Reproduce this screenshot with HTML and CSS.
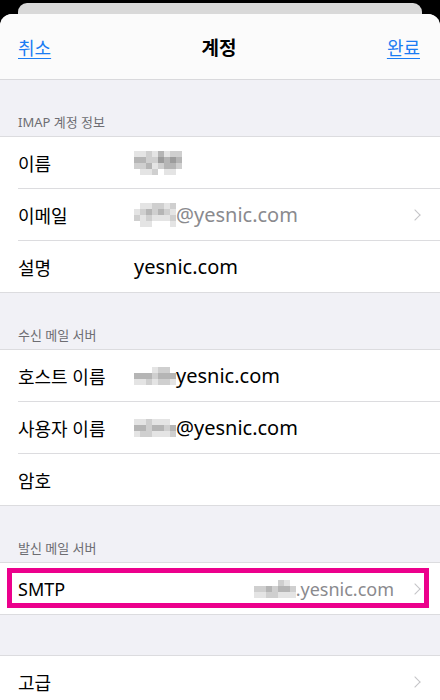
FILE: index.html
```html
<!DOCTYPE html>
<html lang="ko">
<head>
  <meta charset="UTF-8">
  <meta name="viewport" content="width=device-width, initial-scale=1.0">
  <title>계정</title>
  <link rel="stylesheet" href="styles.css">
</head>
<body>
  <div class="back-sheet"></div>
  <div class="sheet">
    <div class="navbar">
      <a class="nav-link" href="#">취소</a>
      <span class="nav-title">계정</span>
      <a class="nav-link" href="#">완료</a>
    </div>

    <div class="group-header">IMAP 계정 정보</div>
    <div class="group">
      <div class="row">
        <span class="label">이름</span>
        <span class="value"><span class="mosaic" data-pattern="11213122/33224343/22312332/01120110"></span></span>
      </div>
      <div class="row">
        <span class="label">이메일</span>
        <span class="value muted"><span class="mosaic" data-pattern="0112212/1232321/2121112/0110001"></span>@yesnic.com</span>
        <span class="chevron"></span>
      </div>
      <div class="row">
        <span class="label">설명</span>
        <span class="value">yesnic.com</span>
      </div>
    </div>

    <div class="group-header">수신 메일 서버</div>
    <div class="group">
      <div class="row">
        <span class="label">호스트 이름</span>
        <span class="value"><span class="mosaic" data-pattern="0001220/3332333/1121221"></span>yesnic.com</span>
      </div>
      <div class="row">
        <span class="label">사용자 이름</span>
        <span class="value"><span class="mosaic" data-pattern="1121110/3323323/1221112"></span>@yesnic.com</span>
      </div>
      <div class="row">
        <span class="label">암호</span>
      </div>
    </div>

    <div class="group-header">발신 메일 서버</div>
    <div class="group">
      <div class="row highlighted">
        <span class="label">SMTP</span>
        <span class="value muted end small"><span class="mosaic" data-pattern="0000210/2232332/1122111"></span>.yesnic.com</span>
        <span class="chevron"></span>
      </div>
    </div>

    <div class="spacer"></div>
    <div class="group">
      <div class="row">
        <span class="label">고급</span>
        <span class="value"></span>
        <span class="chevron"></span>
      </div>
    </div>
  </div>

  <script>
    // 모자이크 처리된 부분 그리기
    document.querySelectorAll(".mosaic").forEach(function (el) {
      const rows = el.dataset.pattern.split("/");
      el.style.gridTemplateColumns = "repeat(" + rows[0].length + ", 6px)";
      rows.forEach(function (row) {
        for (let i = 0; i < row.length; i++) {
          const cell = document.createElement("span");
          cell.className = "m" + row[i];
          el.appendChild(cell);
        }
      });
    });
  </script>
</body>
</html>
```

FILE: styles.css
```css
body {
  margin: 0;
  background-color: #000;
  font-family: "Noto Sans", "Noto Sans CJK KR", sans-serif;
  color: #000;
  overflow: hidden;
}
.back-sheet {
  height: 11px;
  margin: 3px 18px 0;
  background-color: #d9d9d9;
  border-radius: 9px 9px 0 0;
}
.sheet {
  background-color: #f1f1f6;
  border-radius: 12px 12px 0 0;
  overflow: hidden;
  height: 700px;
}
.navbar {
  height: 65px;
  display: flex;
  justify-content: space-between;
  align-items: center;
  padding: 0 20px 0 18px;
  background-color: #fbfbfb;
  border-bottom: 1px solid #d9d9dc;
}
.nav-link {
  color: #1b7cf3;
  font-size: 18px;
  text-decoration: underline;
  text-underline-offset: 3px;
}
.nav-title {
  font-size: 19px;
  font-weight: 600;
}
.group-header {
  height: 56px;
  box-sizing: border-box;
  padding: 0 18px 5px;
  display: flex;
  align-items: flex-end;
  font-size: 13px;
  color: #6d6d72;
  line-height: 18px;
}
.group {
  background-color: #fff;
  border-top: 1px solid #dcdcdf;
  border-bottom: 1px solid #dcdcdf;
}
.row {
  position: relative;
  height: 51px;
  display: flex;
  align-items: center;
  margin-left: 18px;
  padding-right: 21px;
  border-bottom: 1px solid #dcdcdf;
}
.row:last-child {
  border-bottom: none;
}
.label {
  width: 116px;
  flex-shrink: 0;
  font-size: 18px;
}
.value {
  flex: 1;
  display: flex;
  align-items: center;
  font-size: 20px;
}
.value.muted {
  color: #8a8a8e;
}
.value.small {
  font-size: 18px;
}
.value.end {
  justify-content: flex-end;
  padding-right: 17px;
}
.chevron {
  width: 7px;
  height: 7px;
  border-top: 1.5px solid #c4c4c7;
  border-right: 1.5px solid #c4c4c7;
  transform: rotate(45deg);
}
.spacer {
  height: 40px;
}
.highlighted::after {
  content: "";
  position: absolute;
  left: -11px;
  right: 11px;
  top: 5px;
  bottom: 6px;
  border: 5px solid #ec008c;
}
.mosaic {
  display: inline-grid;
  grid-auto-rows: 6px;
}
.m0 { background-color: transparent; }
.m1 { background-color: #e4e4e4; }
.m2 { background-color: #cfcfcf; }
.m3 { background-color: #b5b5b5; }
.m4 { background-color: #9c9c9c; }
```
